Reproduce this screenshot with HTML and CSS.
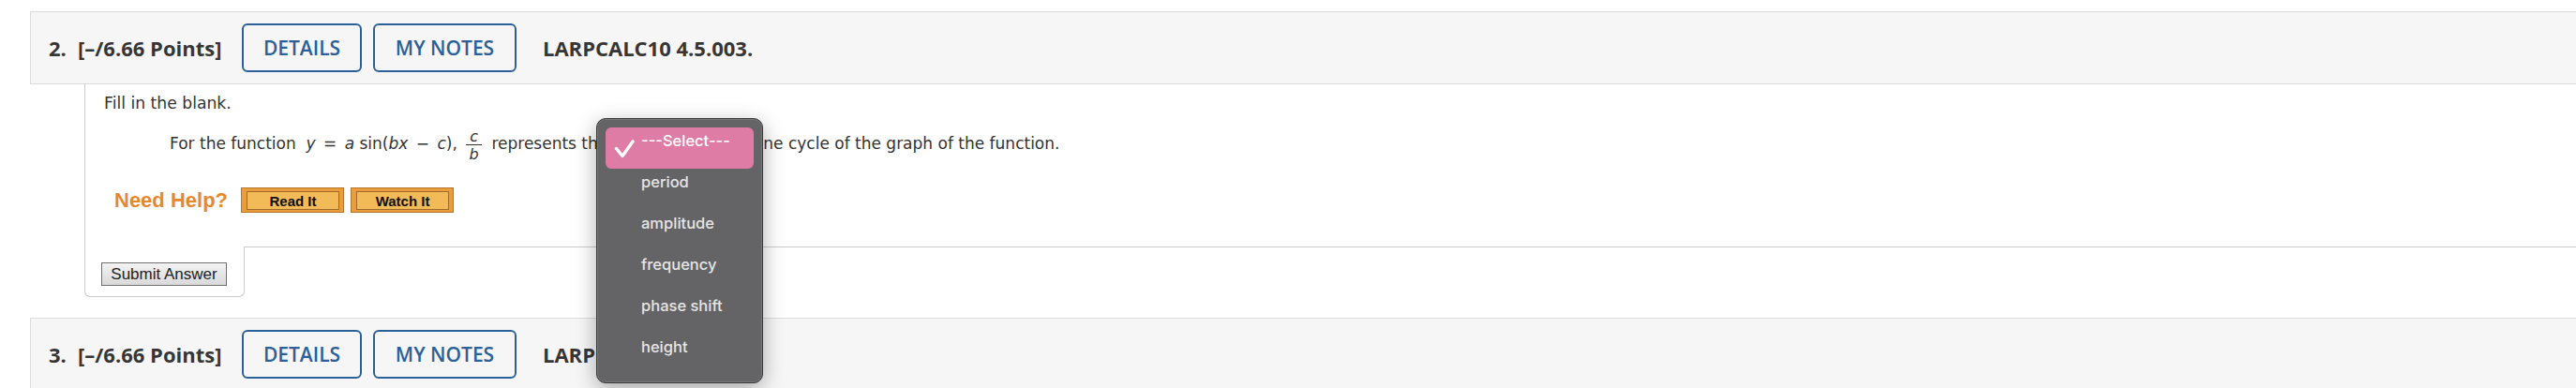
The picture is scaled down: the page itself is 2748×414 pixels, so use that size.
FILE: index.html
```html
<!DOCTYPE html>
<html lang="en">
<head>
<meta charset="utf-8">
<title>Question</title>
<link rel="stylesheet" href="styles.css">
</head>
<body>
<div class="page">
  <section class="question">
    <header class="qhead">
      <span class="qnum">2.</span>
      <span class="qpts">[–/6.66 Points]</span>
      <button class="hbtn details">DETAILS</button>
      <button class="hbtn notes">MY NOTES</button>
      <span class="qid">LARPCALC10 4.5.003.</span>
    </header>
    <div class="qbody">
      <div class="qcontent">
        <p class="inst">Fill in the blank.</p>
        <p class="stmt">For the function&nbsp; <span class="math"><i>y</i> <span class="op">=</span> <i>a</i> sin(<i>bx</i> <span class="op">−</span> <i>c</i>),</span> <span class="frac"><span class="num"><i>c</i></span><span class="den"><i>b</i></span></span> represents the <span class="blank"></span> of one cycle of the graph of the function.</p>
        <div class="help">
          <span class="need">Need Help?</span>
          <button class="rbtn"><span>Read It</span></button>
          <button class="rbtn"><span>Watch It</span></button>
        </div>
      </div>
      <div class="submit-tab"><button class="submit">Submit Answer</button></div>
    </div>
  </section>
  <section class="question">
    <header class="qhead">
      <span class="qnum">3.</span>
      <span class="qpts">[–/6.66 Points]</span>
      <button class="hbtn details">DETAILS</button>
      <button class="hbtn notes">MY NOTES</button>
      <span class="qid">LARPCALC10 4.5.007.</span>
    </header>
  </section>
</div>
<div class="menu">
  <div class="mi sel"><svg class="check" width="22" height="22" viewBox="0 0 22 22"><path d="M2.5 10.5 L9 18.5 L20 3" fill="none" stroke="#fff" stroke-width="3.4" stroke-linecap="round" stroke-linejoin="round"/></svg>---Select---</div>
  <div class="mi">period</div>
  <div class="mi">amplitude</div>
  <div class="mi">frequency</div>
  <div class="mi">phase shift</div>
  <div class="mi">height</div>
</div>
</body>
</html>
```
FILE: styles.css
```css
body {
  margin: 0;
  background: #fff;
  color: #333;
  font-family: "DejaVu Sans", Verdana, sans-serif;
}
.page {
  padding: 12px 0 0 32px;
}
.qhead {
  display: flex;
  align-items: center;
  height: 78px;
  box-sizing: border-box;
  background: #f6f6f6;
  border: 1px solid #dcdcdc;
  border-right: 0;
  padding-left: 19px;
  font-family: "Open Sans", sans-serif;
}
.qnum, .qpts, .qid {
  font-weight: 700;
  font-size: 22px;
  color: #363636;
  white-space: nowrap;
}
.qnum { width: 31px; flex: none; }
.qpts { width: 175px; flex: none; }
.hbtn {
  flex: none;
  height: 52px;
  padding: 0;
  margin: 0 12px 0 0;
  border: 2px solid #2b6199;
  border-radius: 6px;
  background: transparent;
  color: #2b6199;
  font-family: "Open Sans", sans-serif;
  font-weight: 600;
  font-size: 21px;
  text-align: center;
}
.hbtn.details { width: 128px; }
.hbtn.notes { width: 153px; margin-right: 28px; }
.qbody {
  margin-left: 58px;
}
.qcontent {
  border-left: 1px solid #cccccc;
  border-bottom: 1px solid #cccccc;
  padding: 10px 0 36px 20px;
}
.inst {
  margin: 0;
  font-size: 17.2px;
  line-height: 20px;
}
.stmt {
  margin: 17px 0 0 70px;
  font-size: 17px;
  line-height: 20px;
}
.op {
  margin: 0 3px;
}
.frac {
  display: inline-block;
  vertical-align: -11.5px;
  margin: 0 5px 0 4px;
  font-size: 16px;
  text-align: center;
}
.num {
  display: block;
  line-height: 17px;
  padding: 0 4px;
  border-bottom: 1px solid #333;
}
.den {
  display: block;
  line-height: 16px;
  padding-top: 2px;
}
.blank {
  display: inline-block;
  width: 123px;
  height: 10px;
}
.help {
  display: flex;
  align-items: center;
  height: 27px;
  margin-top: 27px;
  padding-left: 11px;
}
.need {
  font-family: "Liberation Sans", Arial, sans-serif;
  font-weight: 700;
  font-size: 22px;
  color: #e5892c;
  margin-right: 14px;
}
.rbtn {
  width: 110px;
  height: 27px;
  box-sizing: border-box;
  margin: 0 7px 0 0;
  padding: 3px 4px 2px 5px;
  border: 1px solid #b4752c;
  background: #ea9d3b;
}
.rbtn span {
  display: flex;
  align-items: center;
  justify-content: center;
  height: 100%;
  box-sizing: border-box;
  border: 1px solid #9f6a2d;
  background: #f3bb58;
  font-family: "Liberation Sans", Arial, sans-serif;
  font-weight: 700;
  font-size: 15px;
  color: #111;
}
.submit-tab {
  width: 171px;
  box-sizing: border-box;
  margin-top: -1px;
  border: 1px solid #cccccc;
  border-top: 0;
  border-radius: 0 0 6px 6px;
  background: #fff;
  padding: 17px 0 11px 17px;
}
.submit {
  display: block;
  width: 134px;
  height: 25px;
  padding: 0;
  border: 1px solid #707070;
  border-radius: 0;
  background: linear-gradient(#f3f3f3, #d9d9d9);
  font-family: "Liberation Sans", Arial, sans-serif;
  font-size: 17px;
  color: #222;
}
.question + .question {
  margin-top: 22px;
}
.menu {
  position: absolute;
  left: 636px;
  top: 126px;
  width: 178px;
  box-sizing: border-box;
  padding: 9px 9px 8px;
  background: #646467;
  border: 1px solid #38383a;
  border-radius: 10px;
  box-shadow: 0 6px 22px rgba(0, 0, 0, 0.32), inset 0 0 0 1px rgba(255, 255, 255, 0.13);
  font-family: Inter, "Noto Sans", sans-serif;
}
.mi {
  position: relative;
  height: 44px;
  line-height: 28px;
  padding-left: 38px;
  font-size: 16.5px;
  font-weight: 500;
  color: #e6e6e6;
}
.mi.sel {
  background: #de7ca6;
  border-radius: 6px;
  color: #fff;
}
.check {
  position: absolute;
  left: 9px;
  top: 12px;
}
```
